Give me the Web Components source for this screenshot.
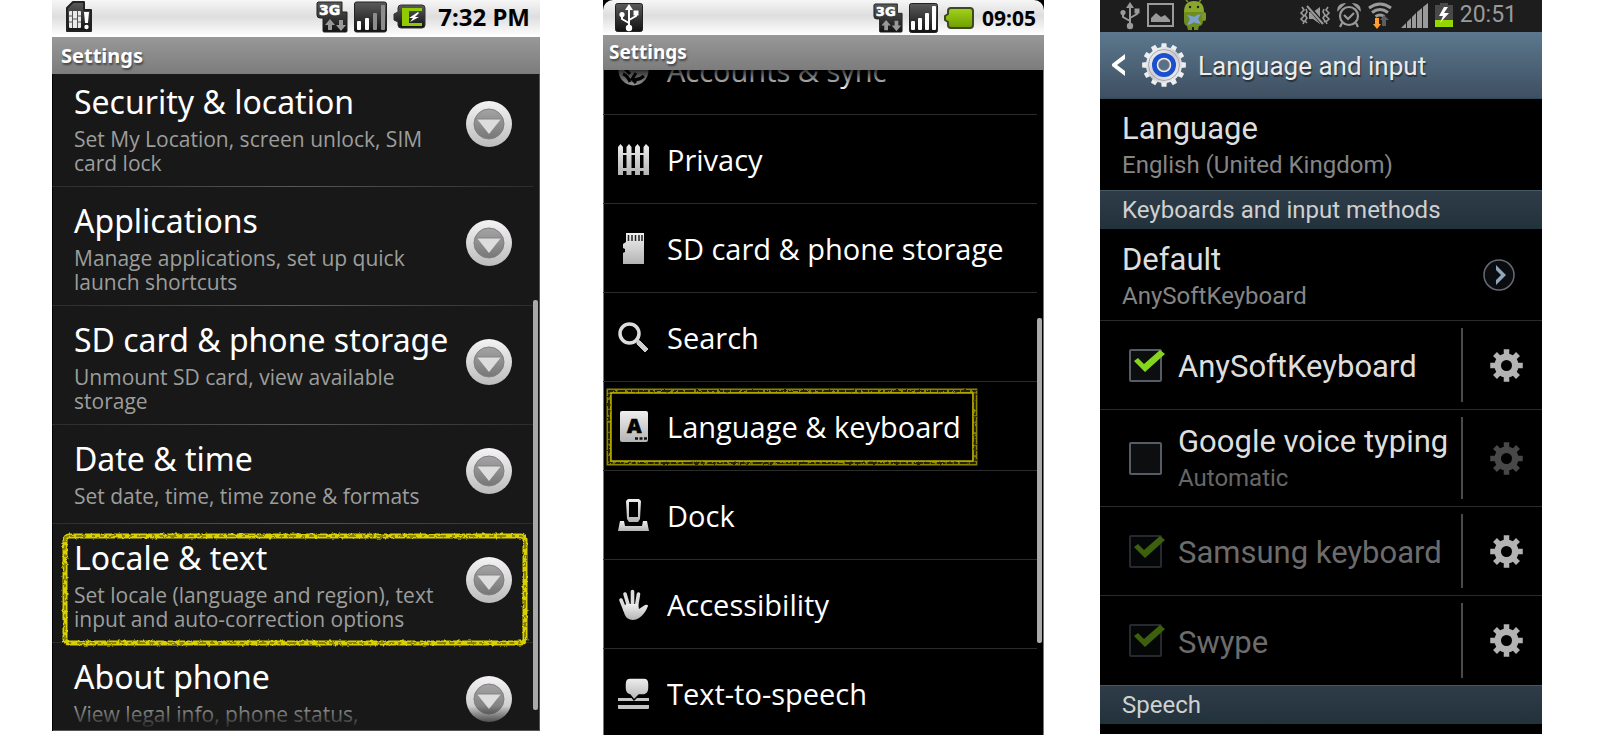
<!DOCTYPE html>
<html lang="en">
<head>
<meta charset="utf-8">
<title>Settings</title>
<style>
    html, body {
        height: 100%;
        margin: 0;
        background: #fff;
    }
    body {
        display: grid;
        grid-template-columns: 52fr 488fr 63fr 441fr 56fr 442fr 58fr;
        overflow: hidden;
    }
    .donut { grid-column: 2; padding-bottom: 6px; }
    .froyo { grid-column: 4; padding-bottom: 2px; }
    .touchwiz { grid-column: 6; padding-bottom: 3px; }
</style>
</head>
<body>
<phone-screen class="donut" theme="donut">
    <status-bar slot="top" theme="donut">
        <sys-icon name="sim"></sys-icon>
        <sys-icon slot="end" name="threeG"></sys-icon>
        <sys-icon slot="end" name="signalLow"></sys-icon>
        <sys-icon slot="end" name="charging"></sys-icon>
        <span slot="end">7:32 PM</span>
    </status-bar>
    <title-bar slot="top" theme="donut">Settings</title-bar>
    <detail-row label="Security &amp; location">Set My Location, screen unlock, SIM card lock</detail-row>
    <detail-row label="Applications">Manage applications, set up quick launch shortcuts</detail-row>
    <detail-row label="SD card &amp; phone storage">Unmount SD card, view available storage</detail-row>
    <detail-row label="Date &amp; time">Set date, time, time zone &amp; formats</detail-row>
    <detail-row label="Locale &amp; text" marked>Set locale (language and region), text input and auto-correction options</detail-row>
    <detail-row label="About phone" tall>View legal info, phone status,</detail-row>
</phone-screen>

<phone-screen class="froyo" theme="froyo">
    <status-bar slot="top" theme="froyo">
        <sys-icon name="usbBadge"></sys-icon>
        <sys-icon slot="end" name="threeG" size="30"></sys-icon>
        <sys-icon slot="end" name="signalFull"></sys-icon>
        <sys-icon slot="end" name="battery"></sys-icon>
        <span slot="end">09:05</span>
    </status-bar>
    <title-bar slot="top" theme="froyo">Settings</title-bar>
    <icon-row icon="sync">Accounts &amp; sync</icon-row>
    <icon-row icon="fence">Privacy</icon-row>
    <icon-row icon="sdcard">SD card &amp; phone storage</icon-row>
    <icon-row icon="search">Search</icon-row>
    <icon-row icon="language" marked>Language &amp; keyboard</icon-row>
    <icon-row icon="dock">Dock</icon-row>
    <icon-row icon="hand">Accessibility</icon-row>
    <icon-row icon="speech">Text-to-speech</icon-row>
</phone-screen>

<phone-screen class="touchwiz" theme="touchwiz">
    <status-bar slot="top" theme="touchwiz">
        <sys-icon name="usb"></sys-icon>
        <sys-icon name="picture"></sys-icon>
        <sys-icon name="droid"></sys-icon>
        <sys-icon slot="end" name="vibrate"></sys-icon>
        <sys-icon slot="end" name="alarm"></sys-icon>
        <sys-icon slot="end" name="wifi"></sys-icon>
        <sys-icon slot="end" name="signalSteps"></sys-icon>
        <sys-icon slot="end" name="chargingTall"></sys-icon>
        <span slot="end">20:51</span>
    </status-bar>
    <action-bar slot="top">Language and input</action-bar>
    <pref-row label="Language">English (United Kingdom)</pref-row>
    <section-head>Keyboards and input methods</section-head>
    <pref-row label="Default" more line>AnySoftKeyboard</pref-row>
    <keyboard-row label="AnySoftKeyboard" checked line></keyboard-row>
    <keyboard-row label="Google voice typing" note="Automatic" nosetup line></keyboard-row>
    <keyboard-row label="Samsung keyboard" checked locked line></keyboard-row>
    <keyboard-row label="Swype" checked locked></keyboard-row>
    <section-head>Speech</section-head>
</phone-screen>

<script>
// Closed outline of a cog with n square teeth around (c, c)
function cog(n, c, outer, inner, topWidth, rootWidth) {
    const points = [];
    for (let i = 0; i < n; i++) {
        const a = i * 2 * Math.PI / n;
        [[inner, -rootWidth], [outer, -topWidth], [outer, topWidth], [inner, rootWidth]].forEach(([r, w]) => {
            points.push((c + r * Math.sin(a + w)).toFixed(2) + " " + (c - r * Math.cos(a + w)).toFixed(2));
        });
    }
    return "M" + points.join("L") + "Z";
}

const dark = `<linearGradient id="d" x2="0" y2="1"><stop stop-color="#5a5a5a"/><stop offset="1" stop-color="#111"/></linearGradient>`;
const silver = `<linearGradient id="s" x2="0" y2="1"><stop stop-color="#efefef"/><stop offset="1" stop-color="#b4b4b4"/></linearGradient>`;
const trident = `<path d="M14 5v19M14 20l-7-4v-4M14 17l7-4v-3" fill="none" stroke="currentColor" stroke-width="2"/>
    <path d="M14 1l4 6h-8z"/><circle cx="14" cy="25" r="3.2"/><circle cx="7" cy="11.5" r="2.6"/><path d="M18.5 7.5h5v5h-5z"/>`;

// name: [width, height, markup]
const icons = {
    sim: [26, 31, `${dark}<path d="M1 7l6-6h11v8h7v21H1z" fill="url(#d)" stroke="#222" stroke-width="2" stroke-linejoin="round"/>
        <rect x="3" y="10" width="12" height="17" rx="1" fill="#e9e9e9"/>
        <path d="M3 15h3.500M3 21h3.500M11.500 15H15M11.500 21H15M6.500 10v17M11.500 10v17M6.500 18h5" stroke="#555" fill="none"/>
        <path d="M18 11h5l-1 11h-3z" fill="#fff"/><circle cx="20.500" cy="26" r="2.200" fill="#fff"/>`],
    threeG: [32, 32, `${dark}<path d="M2 1h24v10h5v19q0 1-1 1H8q-1 0-1-1V17H4q-3 0-3-3V2z" fill="url(#d)" stroke="#222"/>
        <text x="3" y="14" font-family="DejaVu Sans, sans-serif" font-weight="bold" font-size="14" fill="#fff" stroke="#fff" stroke-width=".6">3G</text>
        <path d="M14 18l5 6h-3v5h-4v-5H9zM25 30l-5-6h3v-5h4v5h3z" fill="#999"/>`],
    signalLow: [33, 32, `${dark}<rect x=".5" y="1" width="32" height="30" rx="2" fill="url(#d)" stroke="#222"/>
        <g fill="#fff"><rect x="3" y="20" width="4" height="9" rx="1"/><rect x="11" y="17" width="4" height="12" rx="1"/></g>
        <g fill="#8d8d8d"><rect x="19" y="12" width="4" height="17" rx="1"/><rect x="27" y="4" width="4" height="25" rx="1"/></g>`],
    signalFull: [29, 30, `${dark}<rect x=".5" y=".5" width="28" height="29" rx="2" fill="url(#d)" stroke="#222"/>
        <g fill="#fff"><rect x="2" y="18" width="4" height="9" rx="1"/><rect x="9" y="15" width="4" height="12" rx="1"/>
        <rect x="16" y="10" width="4" height="17" rx="1"/><rect x="23" y="3" width="4" height="24" rx="1"/></g>`],
    charging: [33, 26, `${dark}<path d="M8 1h21q3 0 3 3v17q0 3-3 3H8q-3 0-3-3v-3l-4-2v-6l4-2V4q0-3 3-3z" fill="url(#d)" stroke="#333"/>
        <path d="M9 4h20v3H16v12h13v3H9z" fill="#8fcb00"/><path d="M25 8l-9 6h4l-3 4 9-5h-4l4-4z" fill="#fff"/>`],
    battery: [30, 22, `<linearGradient id="g" x2="0" y2="1"><stop stop-color="#a3d41a"/><stop offset="1" stop-color="#6f9d00"/></linearGradient>
        <path d="M7 1h19q3 0 3 3v14q0 3-3 3H7q-3 0-3-3v-3l-3-2V9l3-2V4q0-3 3-3z" fill="url(#g)" stroke="#3c4a22" stroke-width="2"/>`],
    usbBadge: [28, 29, `${dark}<rect x=".5" y=".5" width="27" height="28" rx="2" fill="url(#d)" stroke="#222"/><g color="#fff" fill="#fff">${trident}</g>`],
    usb: [17, 28, `<g transform="translate(-5 0)" color="#9a9a9a" fill="#9a9a9a">${trident}</g>`],
    picture: [27, 24, `<rect x="1" y="1" width="25" height="22" fill="none" stroke="#9a9a9a" stroke-width="2"/>
        <path d="M4 19v-4l5-5 5 4 4-2 5 5v2z" fill="#9a9a9a"/>`],
    droid: [24, 30, `<path d="M5 2l-2-2M16 2l2-2" stroke="#7c9425" stroke-width="1.5"/>
        <path d="M1 12Q1 1 11 1t10 11z" fill="#8aa62c"/><path d="M1 12h19v8q0 6-4 6l-1 4h-4v-3H9v3H5l-1-4q-3-1-3-5z" fill="#6f8c1e"/>
        <rect x="19" y="12" width="4" height="9" rx="2" fill="#7d982a"/><circle cx="7" cy="7" r="1.2" fill="#222"/><circle cx="15" cy="7" r="1.2" fill="#222"/>
        <path d="M4 15l5 1 2 1 3-2 4-1-3 5 3 5-5-1-2-1-3 2-4 1 3-6z" fill="#7ba0d2"/>`],
    vibrate: [30, 22, `<g fill="none" stroke="#9a9a9a" stroke-width="1.6"><path d="M2 3l2 3-3 3 3 3-3 3 3 3-1 2M6 5l1 3-2 3 2 3-2 3 2 2M28 3l-2 3 3 3-3 3 3 3-3 3 1 2M24 5l-1 3 2 3-2 3 2 3-2 2"/></g>
        <path d="M9 8h4l7-5v17l-7-5H9z" fill="#9a9a9a"/><path d="M8 2l15 18" stroke="#1d1d1d" stroke-width="4"/><path d="M7 2l16 18" stroke="#9a9a9a" stroke-width="2"/>`],
    alarm: [24, 25, `<g fill="none" stroke="#9a9a9a" stroke-width="2.2"><circle cx="12" cy="13" r="9"/><path d="M7 12l4 4 6-6M5 20l-2 4M19 20l2 4"/></g>
        <path d="M1 7q0-5 6-6zM23 7q0-5-6-6z" fill="#9a9a9a" stroke="#9a9a9a" stroke-width="1.5"/>`],
    wifi: [26, 27, `<g fill="none" stroke="#9a9a9a" stroke-width="3"><path d="M1 6q11-8 22 0M4 10.500q8-6 16 0M7.500 14.500q4.500-3 9 0"/></g>
        <path d="M16 13l5 5h-3v6h-4v-6h-2z" fill="#5d5d5d"/><path d="M7 16h4v6h2l-4 5-4-5h2z" fill="#ff9d2e"/>`],
    signalSteps: [27, 25, `<path d="M0 25l5-5v5zM6 25v-6l4-4v10zM11 25V14l4-4v15zM16 25V9l5-4v20zM22 25V4l5-4v25z" fill="#9a9a9a"/>`],
    chargingTall: [18, 24, `<path d="M5 0h8v2h5v15H0V2h5z" fill="#494949"/><path d="M0 17h18v7H0z" fill="#97d700"/><path d="M9 4L4 13h4l-3 7 9-10H9l4-6z" fill="#fff"/>`],
    sync: [31, 31, `${silver}<circle cx="15.500" cy="15.500" r="15" fill="url(#s)"/>
        <path d="M6 8q10-4 19 3M26 21q-6 5-12 3M5 19q5 2 7 8M18 28l-4-4 4-6M7 14l5 5" stroke="#050505" stroke-width="3" fill="none"/>`],
    fence: [31, 31, `${silver}<path d="M0 31V3l2.500-3L5 3v6h3.500V3L11 0l2.500 3v6H17V3l2.500-3L22 3v6h3.500V3L28 0l3 3v28h-5.500v-4H22v4h-5v-4h-3.500v4h-5v-4H5v4zM5 11v13h3.500V11zM13.500 11v13H17V11zM22 11v13h3.500V11z" fill="url(#s)" fill-rule="evenodd"/>`],
    sdcard: [31, 31, `${silver}<path d="M8 0h18v31H5V20l2-1v-3l-2-1v-4l3-2z" fill="url(#s)"/><path d="M10.500 2v6M14 2v6M17.500 2v6M21 2v6M24 2v6" stroke="#222" stroke-width="1.5"/>`],
    search: [31, 31, `<circle cx="11.500" cy="11.500" r="9.500" fill="none" stroke="#dcdcdc" stroke-width="3.5"/>
        <path d="M19 18l3 1 8 8-3 3-8-8z" fill="#cfcfcf" stroke="#cfcfcf" stroke-linejoin="round"/>`],
    language: [31, 31, `${silver}<rect x="2" y="0" width="28" height="31" rx="2" fill="url(#s)"/>
        <text x="9" y="22" font-family="Noto Sans, sans-serif" font-weight="900" font-size="20" stroke="#000" stroke-width=".6">A</text>
        <path d="M17 27.500h3M21.500 27.500h3M26 27.500h3" stroke="#111" stroke-width="2.5"/>`],
    dock: [31, 32, `${silver}<path d="M10 0h11l2 2-1 18-2 3h-9l-2-3L8 2zM11 3v15h9V3z" fill="url(#s)" fill-rule="evenodd"/>
        <path d="M2 22h4l1 5h17l1-5h4l2 10H0z" fill="url(#s)"/>`],
    hand: [31, 31, `${silver}<path d="M7 21L3 11M10.500 17L7 5M14.500 17V2.500M18.500 17l2-12" stroke="#ddd" stroke-width="3.6" stroke-linecap="round"/>
        <path d="M5 19l3-4h12l1 5 6-4q3-1 3 1-3 8-9 12-6 4-12 0-3-3-4-10z" fill="url(#s)"/>`],
    speech: [31, 31, `${silver}<path d="M0 20h31v3H0zM0 27h31v3q0 1-1 1H1q-1 0-1-1z" fill="#c4c4c4"/>
        <path d="M12 0h14q5 0 5 6v4q0 6-5 7h-5l-5 5-4-5q-5-1-5-7V6q0-6 5-6z" fill="url(#s)" stroke="#000" stroke-width="1.5"/>`],
    expand: [48, 48, `<linearGradient id="r" x2="0" y2="1"><stop stop-color="#f5f3f5"/><stop offset="1" stop-color="#bdbcbd"/></linearGradient>
        <linearGradient id="c" x2="0" y2="1"><stop stop-color="#a4a4a4"/><stop offset="1" stop-color="#777"/></linearGradient>
        <circle cx="24" cy="24" r="23" fill="url(#r)"/><circle cx="24" cy="24" r="15" fill="url(#c)" stroke="#808080"/>
        <path d="M12 19h24L24 34z" fill="#ddd"/><path d="M10 19h28" stroke="#858585"/>`],
    next: [32, 32, `<circle cx="16" cy="16" r="15" fill="#0b0c0f" stroke="#656a75" stroke-width="1.5"/><path d="M13 6l10 10-10 10v-5l5-5-5-5z" fill="#8fa6b8"/>`],
    back: [14, 22, `<path d="M13 0v5L5 11l8 6v5L0 12v-2z" fill="#fff"/>`],
    gear: [33, 33, `<path d="${cog(8, 16.5, 16.5, 11.5, 0.17, 0.24)}" fill="#b3b3b3"/><circle cx="16.500" cy="16.500" r="12" fill="#b3b3b3"/><circle cx="16.500" cy="16.500" r="5.500" fill="#000"/>`],
    blueGear: [44, 44, `<linearGradient id="m" x2="1" y2="1"><stop stop-color="#fff"/><stop offset=".5" stop-color="#c9ccd1"/><stop offset="1" stop-color="#fafafa"/></linearGradient>
        <path d="${cog(12, 22, 22, 17, 0.11, 0.17)}" fill="#eceef0"/><circle cx="22" cy="22" r="18" fill="url(#m)"/>
        <circle cx="22" cy="22" r="15.500" fill="none" stroke="#a9a9ad"/>
        <circle cx="22" cy="22" r="9" fill="none" stroke="#1b4fd0" stroke-width="6"/><circle cx="22" cy="22" r="6.500" fill="#777" stroke="#eee" stroke-width="1.5"/><circle cx="22" cy="22" r="4.500" fill="#56728a"/>`],
    tick: [36, 36, `<path d="M5 12l4-3 6 6L31 1l5 4-20 18z" fill="#86d51d"/>`]
};

class SysIcon extends HTMLElement {
    connectedCallback() {
        const [w, h, body] = icons[this.getAttribute("name")];
        const size = Number(this.getAttribute("size")) || w;
        this.attachShadow({ mode: "open" }).innerHTML = `
        <style>
            :host { display: block; flex: none; }
            svg { display: block; overflow: visible; }
        </style>
        <svg width="${size}" height="${Math.round(size * h / w)}" viewBox="0 0 ${w} ${h}" aria-hidden="true">${body}</svg>`;
    }
}

class PhoneScreen extends HTMLElement {
    connectedCallback() {
        this.attachShadow({ mode: "open" }).innerHTML = `
        <style>
            :host {
                display: flex;
                flex-direction: column;
                box-sizing: border-box;
                min-width: 0;
                height: 100vh;
                font-family: "Noto Sans", sans-serif;
            }
            :host([theme=froyo]) main { font-family: "Open Sans", sans-serif; }
            :host([theme=touchwiz]) { font-family: Roboto, sans-serif; }
            header { background: #000; }
            main {
                position: relative;
                flex: 1;
                min-height: 0;
                overflow: hidden;
                background: #000;
            }
            :host([theme=donut]) main { background: #181818; box-shadow: inset 1px 0 #000, inset -1px -1px #555; }
            :host([theme=froyo]) main { box-shadow: inset 1px 0 #777, inset -1px 0 #777; }
            :host([theme=donut]) .list { margin-top: -6px; padding-right: 7px; }
            :host([theme=froyo]) .list { margin-top: -44px; padding-right: 7px; }
            .fade, .thumb { display: none; position: absolute; }
            :host([theme=donut]) .fade { display: block; inset: auto 8px 1px 1px; height: 24px; background: linear-gradient(transparent, #181818); }
            :host([theme=froyo]) .fade { display: block; inset: 0 1px auto 1px; height: 20px; background: linear-gradient(#000c, transparent); }
            .thumb { right: 2px; width: 5px; border-radius: 2px; background: #a9a9a9; }
            :host([theme=donut]) .thumb { display: block; top: 34.4%; height: 62.4%; }
            :host([theme=froyo]) .thumb { display: block; top: 37.3%; height: 48.8%; }
        </style>
        <header><slot name="top"></slot></header>
        <main>
            <div class="list"><slot></slot></div>
            <div class="fade"></div>
            <div class="thumb"></div>
        </main>`;
    }
}

class StatusBar extends HTMLElement {
    connectedCallback() {
        this.attachShadow({ mode: "open" }).innerHTML = `
        <style>
            :host {
                display: flex;
                justify-content: space-between;
                align-items: center;
                height: 37px;
                padding: 0 10px 0 14px;
                background: linear-gradient(#f6f6f6, #dedede 45%, #fff);
                color: #000;
                font-weight: bold;
                font-size: 24px;
                line-height: 32px;
            }
            div { display: flex; align-items: center; gap: 6px; }
            ::slotted(span) { margin-left: 6px; }
            :host([theme=donut]) div { padding-bottom: 4px; }
            :host([theme=froyo]) {
                height: 35px;
                padding: 0 8px 0 12px;
                border-radius: 10px 10px 0 0;
                font-size: 21px;
            }
            :host([theme=froyo]) ::slotted(span) { margin-left: 2px; }
            :host([theme=touchwiz]) {
                height: 32px;
                padding: 0 25px 0 21px;
                background: #1d1d1d;
                color: #9a9a9a;
                font-weight: normal;
                font-size: 23px;
            }
            :host([theme=touchwiz]) div { gap: 7px; padding-bottom: 2px; }
            :host([theme=touchwiz]) div:first-of-type { gap: 9px; }
            :host([theme=touchwiz]) ::slotted(span) { margin-left: 0; }
        </style>
        <div><slot></slot></div>
        <div><slot name="end"></slot></div>`;
    }
}

class TitleBar extends HTMLElement {
    connectedCallback() {
        this.attachShadow({ mode: "open" }).innerHTML = `
        <style>
            :host {
                display: block;
                padding: 0 9px;
                background: linear-gradient(#989898, #7c7c7c);
                color: #fff;
                text-shadow: 1px 2px 2px #444;
            }
            h1 { margin: 0; font-size: 20px; line-height: 37px; }
            :host([theme=froyo]) { padding: 0 6px; }
            :host([theme=froyo]) h1 { font-size: 19px; line-height: 35px; }
        </style>
        <h1><slot></slot></h1>`;
    }
}

class ActionBar extends HTMLElement {
    connectedCallback() {
        this.attachShadow({ mode: "open" }).innerHTML = `
        <style>
            :host {
                display: flex;
                align-items: center;
                gap: 12px;
                height: 67px;
                box-sizing: border-box;
                padding-left: 12px;
                background: linear-gradient(#5c788e, #3e4f61);
                border-bottom: 1px solid #2f4a5a;
                color: #ececec;
                text-shadow: 1px 2px 1px #28323c;
            }
            button { display: flex; align-items: center; gap: 16px; padding: 0; border: 0; background: none; }
            h1 { margin: 0; padding-top: 2px; font-weight: normal; font-size: 26px; line-height: 32px; }
        </style>
        <button aria-label="Back">
            <sys-icon name="back"></sys-icon>
            <sys-icon name="blueGear"></sys-icon>
        </button>
        <h1><slot></slot></h1>`;
    }
}

// Hand-drawn frames laid over a row that carries the "marked" attribute
const roughFilter = `
    <filter id="rough" x="-5%" y="-10%" width="110%" height="120%">
        <feTurbulence type="fractalNoise" baseFrequency=".3" numOctaves="2" seed="4"/>
        <feDisplacementMap in="SourceGraphic" scale="3" xChannelSelector="R" yChannelSelector="G"/>
    </filter>`;
const crayonFrame = `
    <svg class="frame" aria-hidden="true">${roughFilter}
        <g fill="none" filter="url(#rough)">
            <rect width="100%" height="100%" rx="4" stroke="#d8d000" stroke-width="5"/>
            <rect width="100%" height="100%" rx="4" stroke="#8a8400" stroke-width="2" stroke-dasharray="5 3 9 6 3 4"/>
        </g>
    </svg>`;
const doubleFrame = `
    <svg class="frame" aria-hidden="true">${roughFilter}
        <g fill="none">
            <rect width="100%" height="100%" stroke="#8c8400" stroke-width="5"/>
            <rect width="100%" height="100%" stroke="#262400" stroke-width="2" stroke-dasharray="6 1 9 2 4 1" filter="url(#rough)"/>
            <rect class="inner" stroke="#cfc400"/>
        </g>
    </svg>`;

class DetailRow extends HTMLElement {
    connectedCallback() {
        this.attachShadow({ mode: "open" }).innerHTML = `
        <style>
            :host {
                display: flex;
                align-items: flex-start;
                gap: 10px;
                position: relative;
                box-sizing: border-box;
                min-height: 99px;
                padding: 12px 20px 12px 22px;
                background: linear-gradient(90deg, #2c2c2c, #585858, #2c2c2c) bottom / 100% 1px no-repeat;
            }
            :host([tall]) { min-height: 119px; }
            div { flex: 1; min-width: 0; }
            h2 { margin: 0 0 3px; color: #fff; font-weight: normal; font-size: 32px; line-height: 44px; white-space: nowrap; }
            p { margin: 0; color: #9c9e9c; font-family: "Open Sans", sans-serif; font-size: 21px; line-height: 24px; }
            button { align-self: center; padding: 0 0 8px; border: 0; background: none; }
            .frame { position: absolute; inset: 12px 8px 0 13px; width: calc(100% - 21px); height: calc(100% - 12px); overflow: visible; }
        </style>
        <div>
            <h2></h2>
            <p><slot></slot></p>
        </div>
        <button><sys-icon name="expand"></sys-icon></button>
        ${this.hasAttribute("marked") ? crayonFrame : ""}`;
        const label = this.getAttribute("label");
        this.shadowRoot.querySelector("h2").textContent = label;
        this.shadowRoot.querySelector("button").setAttribute("aria-label", "Open " + label);
    }
}

class IconRow extends HTMLElement {
    connectedCallback() {
        this.attachShadow({ mode: "open" }).innerHTML = `
        <style>
            :host { display: block; position: relative; }
            a {
                display: flex;
                align-items: center;
                gap: 18px;
                box-sizing: border-box;
                height: 89px;
                padding-left: 15px;
                border-bottom: 1px solid #2b2b2b;
                color: #fff;
                font-size: 29px;
                line-height: 40px;
                text-decoration: none;
                white-space: nowrap;
            }
            span { padding-top: 2px; }
            .frame { position: absolute; left: 6px; top: 9px; width: 84.3%; height: 72px; overflow: visible; }
            .inner { x: 2px; y: 2px; width: calc(100% - 4px); height: calc(100% - 4px); }
        </style>
        <a href="#"><sys-icon name="${this.getAttribute("icon")}"></sys-icon><span><slot></slot></span></a>
        ${this.hasAttribute("marked") ? doubleFrame : ""}`;
    }
}

class SectionHead extends HTMLElement {
    connectedCallback() {
        this.attachShadow({ mode: "open" }).innerHTML = `
        <style>
            :host {
                display: block;
                padding: 0 22px;
                background: linear-gradient(#2e3c49, #22323b);
                border-top: 1px solid #465764;
                color: #d0d0d0;
            }
            h2 { margin: 0; font-weight: normal; font-size: 24px; line-height: 38px; }
        </style>
        <h2><slot></slot></h2>`;
    }
}

class PrefRow extends HTMLElement {
    connectedCallback() {
        this.attachShadow({ mode: "open" }).innerHTML = `
        <style>
            :host {
                display: flex;
                align-items: center;
                justify-content: space-between;
                box-sizing: border-box;
                min-height: 91px;
                padding: 1px 27px 0 22px;
            }
            :host([line]) { min-height: 92px; border-bottom: 1px solid #2a2a2a; }
            :host([line]) div { padding-top: 2px; }
            h3 { margin: 0 0 4px; color: #dedede; font-weight: normal; font-size: 31px; line-height: 36px; }
            p { margin: 0; color: #858585; font-size: 24px; line-height: 28px; }
            button { padding: 0; border: 0; background: none; }
        </style>
        <div>
            <h3></h3>
            <p><slot></slot></p>
        </div>
        ${this.hasAttribute("more") ? `<button aria-label="Choose"><sys-icon name="next"></sys-icon></button>` : ""}`;
        this.shadowRoot.querySelector("h3").textContent = this.getAttribute("label");
    }
}

class KeyboardRow extends HTMLElement {
    connectedCallback() {
        const has = name => this.hasAttribute(name);
        const note = this.getAttribute("note");
        this.attachShadow({ mode: "open" }).innerHTML = `
        <style>
            :host {
                display: flex;
                box-sizing: border-box;
                min-height: 89px;
                padding: 7px 19px 7px 29px;
            }
            :host([note]) { min-height: 97px; }
            :host([line]) { border-bottom: 1px solid #2a2a2a; }
            .box { position: relative; flex: none; width: 33px; height: 33px; }
            :host([locked]) .box { opacity: .45; }
            input {
                display: block;
                appearance: none;
                box-sizing: border-box;
                width: 33px;
                height: 33px;
                margin: 0;
                border: 2px solid #555c66;
                border-radius: 2px;
                background: #0c0e10;
            }
            .box sys-icon { display: none; position: absolute; left: 0; top: 0; }
            input:checked + sys-icon { display: block; }
            label { display: flex; align-items: center; gap: 16px; flex: 1; color: #dedede; font-size: 31px; line-height: 36px; white-space: nowrap; }
            :host([locked]) label { color: #6c6c6c; }
            :host(:not([note])) .name { padding-top: 4px; }
            small { display: block; margin-top: 4px; color: #666; font-size: 24px; line-height: 28px; }
            button { padding: 0 0 0 27px; border: 0; border-left: 2px solid #4a4a4a; background: none; }
            button:disabled sys-icon { opacity: .4; }
        </style>
        <label>
            <span class="box">
                <input type="checkbox" ${has("checked") ? "checked" : ""} ${has("locked") ? "disabled" : ""}>
                <sys-icon name="tick"></sys-icon>
            </span>
            <span class="name">${this.getAttribute("label")}${note ? `<small>${note}</small>` : ""}</span>
        </label>
        <button aria-label="Keyboard settings" ${has("nosetup") ? "disabled" : ""}><sys-icon name="gear"></sys-icon></button>`;
    }
}

customElements.define("sys-icon", SysIcon);
customElements.define("phone-screen", PhoneScreen);
customElements.define("status-bar", StatusBar);
customElements.define("title-bar", TitleBar);
customElements.define("action-bar", ActionBar);
customElements.define("detail-row", DetailRow);
customElements.define("icon-row", IconRow);
customElements.define("section-head", SectionHead);
customElements.define("pref-row", PrefRow);
customElements.define("keyboard-row", KeyboardRow);
</script>
</body>
</html>
